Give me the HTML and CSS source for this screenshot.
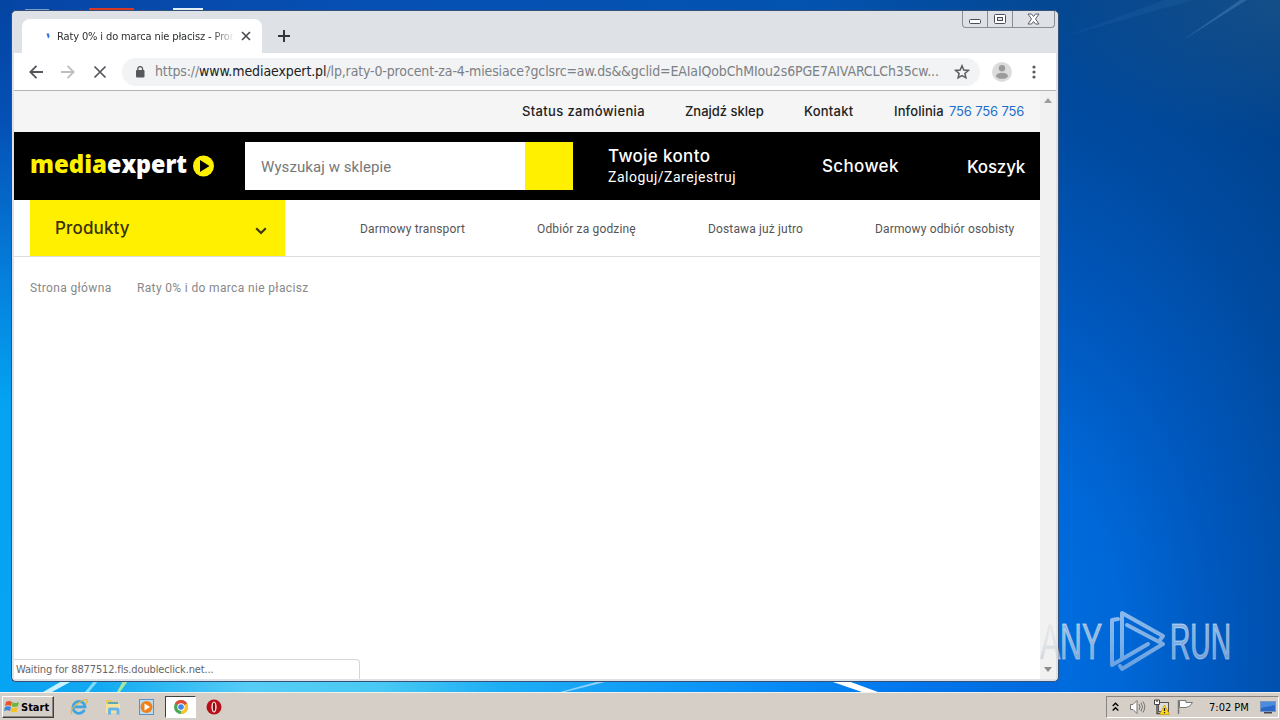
FILE: index.html
```html
<!DOCTYPE html>
<html lang="pl">
<head>
  <meta charset="UTF-8">
  <meta name="viewport" content="width=device-width, initial-scale=1.0">
  <title>Raty 0% i do marca nie płacisz</title>
  <link rel="stylesheet" href="styles.css">
</head>
<body>
  <div class="desktop">
    <svg class="wallpaper" viewBox="0 0 1280 720">
      <path d="M1180 42 L1243 -2 L1250 -2 Z" fill="#5a94cc" opacity=".35"/>
      <path d="M1060 38 L1170 -2 L1200 -2 Z" fill="#3f86c8" opacity=".12"/>
      <rect x="25" y="9" width="24" height="2" fill="#7b9dc8"/>
      <rect x="89" y="8" width="45" height="3" fill="#d63a25"/>
      <rect x="173" y="8" width="30" height="3" fill="#e4eff5"/>
      <path d="M43 692 L62 681 L72 681 L52 692 Z" fill="#c9f1ff"/>
      <path d="M85 692 L94 681 L98 681 L89 692 Z" fill="#7fdcff"/>
      <path d="M117 692 L123 681 L128 681 L120 692 Z" fill="#a6e8a0"/>
      <path d="M560 692 L600 681 L609 681 L565 692 Z" fill="#8fd3ff"/>
      <path d="M830 681 L848 681 L878 692 L862 692 Z" fill="#fff"/>
    </svg>

    <div class="window">
      <div class="tabstrip">
        <div class="tab">
          <svg class="spinner" width="4" height="6" viewBox="0 0 4 6"><path d="M.5 .5 H3 L3.500 4 L2 5.500 Z" fill="#2f72d8"/></svg>
          <span class="tab-title">Raty 0% i do marca nie płacisz - Pron</span>
          <svg class="tab-close" width="10" height="10" viewBox="0 0 10 10"><path d="M1 1 L9 9 M9 1 L1 9" stroke="#4a4d52" stroke-width="1.7"/></svg>
        </div>
        <svg class="new-tab" width="12" height="12" viewBox="0 0 12 12"><path d="M6 0 V12 M0 6 H12" stroke="#35363a" stroke-width="2"/></svg>
        <div class="window-buttons">
          <div class="wb"><svg width="14" height="12" viewBox="0 0 14 12"><rect x="1.500" y="6.500" width="11" height="4" rx="1" fill="#fff" stroke="#4b4e59"/></svg></div>
          <div class="wb"><svg width="12" height="12" viewBox="0 0 12 12"><rect x=".5" y="1.500" width="11" height="9" rx="1" fill="#fff" stroke="#4b4e59"/><rect x="3.500" y="4.500" width="5" height="3" fill="#dee1e6" stroke="#4b4e59"/></svg></div>
          <div class="wb wb-close"><svg width="13" height="12" viewBox="0 0 13 12"><path d="M1 1 H4.500 L6.500 3.500 L8.500 1 H12 L8.500 6 L12 11 H8.500 L6.500 8.500 L4.500 11 H1 L4.500 6 Z" fill="#fff" stroke="#5a5d68"/></svg></div>
        </div>
      </div>

      <div class="toolbar">
        <svg class="tool-icon" width="14" height="14" viewBox="0 0 14 14"><path d="M14 7 H1.500 M7.500 .8 L1.300 7 L7.500 13.200" fill="none" stroke="#53565b" stroke-width="1.8"/></svg>
        <svg class="tool-icon" width="14" height="14" viewBox="0 0 14 14"><path d="M0 7 H12.500 M6.500 .8 L12.700 7 L6.500 13.200" fill="none" stroke="#bcbec1" stroke-width="1.8"/></svg>
        <svg class="tool-icon" width="14" height="14" viewBox="0 0 14 14"><path d="M1.500 1.500 L12.500 12.500 M12.500 1.500 L1.500 12.500" fill="none" stroke="#53565b" stroke-width="1.7"/></svg>
        <div class="omnibox">
          <svg width="10" height="12" viewBox="0 0 10 12"><rect x="1" y="4" width="8.500" height="7.500" rx="1" fill="#55585d"/><path d="M2.800 5 V3 A2.400 2.400 0 0 1 7.600 3 V5" fill="none" stroke="#55585d" stroke-width="1.300"/></svg>
          <span class="url">https://<b>www.mediaexpert.pl</b>/lp,raty-0-procent-za-4-miesiace?gclsrc=aw.ds&amp;&amp;gclid=EAIaIQobChMIou2s6PGE7AIVARCLCh35cw...</span>
          <svg class="star" width="16" height="16" viewBox="0 0 16 16"><path d="M8 1.800 L9.800 6 L14.300 6.400 L10.900 9.400 L11.900 13.800 L8 11.500 L4.100 13.800 L5.100 9.400 L1.700 6.400 L6.200 6 Z" fill="none" stroke="#5a5d62" stroke-width="1.500"/></svg>
        </div>
        <svg class="avatar" width="20" height="20" viewBox="0 0 20 20"><circle cx="10" cy="10" r="10" fill="#dcdcdc"/><circle cx="10" cy="6.300" r="3.200" fill="#9b9b9b"/><ellipse cx="10" cy="13.800" rx="6" ry="3" fill="#9b9b9b"/></svg>
        <svg class="dots" width="4" height="14" viewBox="0 0 4 14"><circle cx="2" cy="2" r="1.600" fill="#5a5d62"/><circle cx="2" cy="7" r="1.600" fill="#5a5d62"/><circle cx="2" cy="12" r="1.600" fill="#5a5d62"/></svg>
      </div>

      <div class="viewport">
        <div class="page">
          <div class="topbar">
            <span class="t-status">Status zamówienia</span>
            <span class="t-shop">Znajdź sklep</span>
            <span class="t-contact">Kontakt</span>
            <span class="t-info">Infolinia</span>
            <span class="t-phone">756 756 756</span>
          </div>

          <header class="header">
            <svg class="logo" width="190" height="40" viewBox="0 0 190 40">
              <text x="0" y="27" class="logo-text" fill="#fff000" textLength="77" lengthAdjust="spacingAndGlyphs">media</text>
              <text x="77" y="27" class="logo-text" fill="#fff" textLength="80" lengthAdjust="spacingAndGlyphs">expert</text>
              <circle cx="173.500" cy="20" r="10.500" fill="#fff000"/>
              <path d="M170 14 L179.500 20 L170 26 Z" fill="#000"/>
            </svg>
            <div class="search">
              <span class="search-text">Wyszukaj w sklepie</span>
              <span class="search-btn"></span>
            </div>
            <div class="account">
              <span class="account-title">Twoje konto</span>
              <span class="account-sub">Zaloguj/Zarejestruj</span>
            </div>
            <span class="clipboard">Schowek</span>
            <span class="cart">Koszyk</span>
          </header>

          <nav class="nav">
            <div class="products">
              <span class="products-text">Produkty</span>
              <svg width="12" height="8" viewBox="0 0 12 8"><path d="M1.200 1.200 L6 6 L10.800 1.200" fill="none" stroke="#3f3613" stroke-width="2.200"/></svg>
            </div>
            <span class="n-transport">Darmowy transport</span>
            <span class="n-pickup">Odbiór za godzinę</span>
            <span class="n-delivery">Dostawa już jutro</span>
            <span class="n-personal">Darmowy odbiór osobisty</span>
          </nav>

          <div class="breadcrumbs">
            <span class="b-home">Strona główna</span>
            <span class="b-page">Raty 0% i do marca nie płacisz</span>
          </div>
        </div>

        <div class="scrollbar">
          <svg width="8" height="5" viewBox="0 0 8 5"><path d="M0 5 L4 0 L8 5 Z" fill="#9c9c9c"/></svg>
          <svg width="8" height="5" viewBox="0 0 8 5"><path d="M0 0 L4 5 L8 0 Z" fill="#8c8c8c"/></svg>
        </div>
        <div class="status"><span class="status-text">Waiting for 8877512.fls.doubleclick.net...</span></div>
      </div>
    </div>

    <svg class="watermark" width="200" height="75" viewBox="0 0 200 75">
      <defs>
        <linearGradient id="wm" gradientUnits="userSpaceOnUse" x1="0" y1="5" x2="0" y2="68">
          <stop offset="0" stop-color="#fff" stop-opacity=".55"/>
          <stop offset=".5" stop-color="#f0f4fa" stop-opacity=".52"/>
          <stop offset="1" stop-color="#c8d4e6" stop-opacity=".5"/>
        </linearGradient>
      </defs>
      <text class="wm-text wm-shadow" x="4" y="54" textLength="62" lengthAdjust="spacingAndGlyphs">ANY</text>
      <text class="wm-text" x="4" y="54" textLength="62" lengthAdjust="spacingAndGlyphs" fill="url(#wm)" stroke="url(#wm)">ANY</text>
      <path d="M82 14 L76 15 V60 L112 39 M86 54 V8 L127 31 L124 35 M91 20 L127 39 L86 64 L84 61" fill="none" stroke="url(#wm)" stroke-width="4" stroke-linejoin="round" stroke-linecap="round"/>
      <text class="wm-text" x="134" y="54" textLength="61" lengthAdjust="spacingAndGlyphs" fill="url(#wm)" stroke="url(#wm)">RUN</text>
    </svg>

    <div class="taskbar">
      <div class="start">
        <svg width="16" height="16" viewBox="0 0 16 16"><path d="M2 3 Q5 1 8 3 L7 7 Q4 5.500 1 7 Z" fill="#e8552a"/><path d="M8.600 3.300 Q12 5 15 3 L14 7 Q11 9 7.700 7.300 Z" fill="#6fb63c"/><path d="M1 8 Q4 6.500 7 8 L6 12 Q3 10.500 0 12 Z" fill="#3c87d9"/><path d="M7.600 8.300 Q11 10 14 8 L13 12.500 Q10 14 6.600 12.500 Z" fill="#f8c322"/></svg>
        <span>Start</span>
      </div>
      <div class="launch">
        <svg width="18" height="18" viewBox="0 0 18 18"><path d="M14.500 11.800 A6 6 0 1 1 15 8.800 H4.500" fill="none" stroke="#3fa4e4" stroke-width="2.800"/><path d="M2 16 Q-1 12 7 6 Q15 0 17 2 Q18 3 15.500 6" fill="none" stroke="#e3b93c" stroke-width="1.300"/></svg>
      </div>
      <div class="launch">
        <svg width="18" height="18" viewBox="0 0 18 18"><path d="M2 2 H7 L8 3.500 H14 V14 H2 Z" fill="#ecc75b"/><rect x="4" y="4" width="10" height="3" fill="#5aa9b6"/><path d="M2 6 H16 V15 H2 Z" fill="#f6e29a"/><path d="M4 16.500 V11 Q4 9.500 6 9.500 H13 Q15.500 9.500 15.500 11 V16.500 H12.500 V12.500 H7 V16.500 Z" fill="#66b5e6"/></svg>
      </div>
      <div class="launch">
        <svg width="18" height="18" viewBox="0 0 18 18"><rect x="1.500" y="1.500" width="14" height="15" fill="#b9dcf5" stroke="#5794c7"/><circle cx="8.500" cy="9" r="6" fill="#f08019"/><path d="M6.500 5.500 L12 9 L6.500 12.500 Z" fill="#fff"/></svg>
      </div>
      <div class="launch active">
        <svg width="16" height="16" viewBox="0 0 16 16"><circle cx="8" cy="8" r="7" fill="#4aa653"/><path d="M8 8 L1.900 4.500 A7 7 0 0 1 14.100 4.500 Z" fill="#de4b3b"/><path d="M8 8 L14.100 4.500 A7 7 0 0 1 8 15 Z" fill="#fbc62b"/><circle cx="8" cy="8" r="3.700" fill="#fff"/><circle cx="8" cy="8" r="2.800" fill="#4285e8"/></svg>
      </div>
      <div class="launch opera">
        <svg width="16" height="16" viewBox="0 0 16 16"><circle cx="8" cy="8" r="7.500" fill="#b51017"/><ellipse cx="8" cy="8" rx="2.600" ry="5.500" fill="#f4e9e6"/><ellipse cx="8" cy="8" rx="1.200" ry="4.400" fill="#8c0b10"/></svg>
      </div>
      <div class="tray">
        <svg class="tray-up" width="7" height="10" viewBox="0 0 7 10"><path d="M.7 4 L3.500 1.200 L6.300 4 M.7 8.500 L3.500 5.700 L6.300 8.500" fill="none" stroke="#000" stroke-width="1.400"/></svg>
        <svg class="tray-sound" width="17" height="16" viewBox="0 0 17 16"><path d="M1.500 5.500 H4 L8 1.500 V14.500 L4 10.500 H1.500 Z" fill="#fff" stroke="#777"/><path d="M10 5 Q12 8 10 11 M12 3.500 Q15 8 12 12.500 M14 2.500 Q17.500 8 14 13.500" fill="none" stroke="#777"/></svg>
        <svg class="tray-net" width="17" height="16" viewBox="0 0 17 16"><rect x="5.500" y="3.500" width="10" height="9" fill="#dcdcdc" stroke="#555"/><path d="M1.500 1 V5.500 H6.500 V1 Z" fill="#fff" stroke="#444"/><path d="M4 1 V3 M4 6 V14.500 H8" fill="none" stroke="#444" stroke-width="1.300"/><path d="M11.500 6 L16.500 15.500 H6.500 Z" fill="#ffd91c" stroke="#c49700" stroke-width=".7"/><path d="M11.500 9 V12 M11.500 13 V14.300" stroke="#222" stroke-width="1.300"/></svg>
        <svg class="tray-flag" width="17" height="16" viewBox="0 0 17 16"><path d="M1.500 1 V15" stroke="#777" stroke-width="1.500"/><path d="M2.500 1.500 H9 V3.500 H15.500 Q13 8.500 9 8.500 H2.500 Z" fill="#fff" stroke="#777"/></svg>
        <span class="clock">7:02 PM</span>
        <svg class="tray-desk" width="16" height="14" viewBox="0 0 16 14"><rect x=".5" y="1.500" width="15" height="10" fill="#2868c8" stroke="#7c97bd"/><path d="M1 2 H15 V5 L1 8 Z" fill="#4b8ce0"/><rect x="4" y="12" width="8" height="1.500" fill="#43474d"/></svg>
      </div>
    </div>
  </div>
</body>
</html>
```
FILE: styles.css
```css
:root {
  --yellow: #fff000;
  --chrome: #dee1e6;
  --face: #d6cfc8;
  --tahoma: 'DejaVu Sans Condensed', 'DejaVu Sans', sans-serif;
}

* {
  box-sizing: border-box;
}

body {
  margin: 0;
  font-family: Roboto, sans-serif;
  overflow: hidden;
}

svg {
  display: block;
  flex: none;
}

span {
  white-space: nowrap;
}

.desktop {
  position: relative;
  width: 1280px;
  height: 720px;
  display: flex;
  flex-direction: column;
  justify-content: flex-end;
  background:
    linear-gradient(to bottom, #0444a2 0, #0450b5 120px, #0580dd 280px, #04a2f1 400px, #08a5f4 720px) 0 0 / 12px 720px no-repeat,
    linear-gradient(to right, #0aa0f2 0, #12aaf2 100px, #56cdf5 250px, #48c9f3 380px, #1eaef5 500px, #0b93f7 720px, #0078ee 900px, #0068dc 1058px, transparent 1059px) 0 681px / 1280px 12px no-repeat,
    linear-gradient(to right, #0745a6 0, #0650b4 400px, #0353b0 800px, #034792 1060px, transparent 1061px) 0 0 / 1280px 11px no-repeat,
    radial-gradient(ellipse 280px 140px at 1290px 0, rgba(30, 86, 138, .7), transparent),
    radial-gradient(ellipse 480px 760px at 1000px 640px, #0070e4 0, #0068d8 25%, #0058be 45%, #004a9f 70%, #003f86 100%);
}

.wallpaper {
  position: absolute;
  inset: 0;
}

/* browser window */
.window {
  position: absolute;
  left: 11px;
  top: 10px;
  width: 1048px;
  height: 672px;
  display: flex;
  flex-direction: column;
  padding: 0 2px 2px;
  border: 1px solid #34517a;
  border-radius: 5px;
  background: var(--chrome);
}

.tabstrip {
  display: flex;
  height: 42px;
  padding-left: 8px;
}

.tab {
  display: flex;
  align-items: center;
  width: 240px;
  height: 34px;
  margin-top: 8px;
  padding-left: 24px;
  border-radius: 8px 8px 0 0;
  background: #fff;
}

.spinner {
  margin-right: 7px;
}

.tab-title {
  width: 176px;
  font: 11px var(--tahoma);
  letter-spacing: -.13px;
  color: #2c2e31;
  -webkit-mask-image: linear-gradient(to right, #000 155px, transparent 178px);
  mask-image: linear-gradient(to right, #000 155px, transparent 178px);
}

.tab-close {
  margin-left: 8px;
}

.new-tab {
  margin: 19px 0 0 16px;
}

.window-buttons {
  display: flex;
  width: 93px;
  height: 17px;
  margin: 0 1px 0 auto;
  border: 1px solid #8b8e97;
  border-top: 0;
  border-radius: 0 0 4px 4px;
}

.wb {
  display: flex;
  align-items: center;
  justify-content: center;
  width: 25px;
  border-right: 1px solid #8b8e97;
}

.wb-close {
  flex: 1;
  border-right: 0;
}

.toolbar {
  display: flex;
  align-items: center;
  height: 38px;
  padding: 0 20px 0 15px;
  border-bottom: 1px solid #b3b4b6;
  background: #fff;
}

.tool-icon {
  margin-right: 18px;
}

.omnibox {
  display: flex;
  align-items: center;
  width: 858px;
  height: 28px;
  margin-left: -3px;
  padding: 0 10px 0 13px;
  border-radius: 14px;
  background: #f1f3f4;
}

.url {
  width: 784px;
  margin-left: 10px;
  padding-bottom: 1px;
  font: 14px var(--tahoma);
  letter-spacing: -.14px;
  color: #7d8085;
}

.url b {
  font-weight: 400;
  letter-spacing: -.1px;
  color: #202124;
}

.star {
  margin-left: auto;
}

.avatar {
  margin-left: 12px;
}

.dots {
  margin-left: auto;
}

.viewport {
  position: relative;
  display: flex;
  flex: 1;
}

.page {
  width: 1026px;
  background: #fff;
}

/* shop page */
.topbar {
  display: flex;
  align-items: center;
  gap: 40px;
  height: 41px;
  padding: 0 0 2px 508px;
  background: #f5f5f5;
  font: 500 13px Inter, sans-serif;
  color: #222;
}

.t-status {
  width: 123px;
  letter-spacing: .35px;
}

.t-shop { width: 79px; }

.t-contact {
  width: 50px;
  letter-spacing: .25px;
}

.t-info {
  width: 50px;
  letter-spacing: .1px;
}

.t-phone {
  margin-left: -35px;
  font-weight: 400;
  letter-spacing: -.15px;
  color: #1a6fcf;
}

.header {
  display: flex;
  align-items: center;
  height: 68px;
  padding-left: 16px;
  background: #000;
  color: #fff;
}

.logo {
  margin-right: 25px;
}

.logo-text {
  font: 800 25px 'Open Sans', sans-serif;
}

.search {
  display: flex;
  align-items: center;
  width: 328px;
  height: 48px;
  padding-left: 16px;
  background: #fff;
}

.search-text {
  padding-top: 2px;
  font-size: 15px;
  letter-spacing: .08px;
  color: #777;
}

.search-btn {
  width: 48px;
  height: 48px;
  margin-left: auto;
  background: var(--yellow);
}

.account {
  display: flex;
  flex-direction: column;
  width: 249px;
  padding-left: 35px;
}

.account-title,
.clipboard,
.cart {
  font: 500 17px/21px Inter, sans-serif;
  letter-spacing: .35px;
}

.account-sub {
  font-size: 14px;
  line-height: 20px;
  letter-spacing: .5px;
}

.clipboard {
  width: 145px;
}

.cart {
  padding-top: 2px;
  letter-spacing: -.2px;
}

.nav {
  display: flex;
  align-items: center;
  height: 57px;
  padding-left: 16px;
  border-bottom: 1px solid #ddd;
  font-size: 12px;
  line-height: 14px;
  letter-spacing: .15px;
  color: #555;
}

.nav > span {
  padding-top: 2px;
}

.products {
  display: flex;
  align-items: center;
  justify-content: space-between;
  width: 255px;
  height: 56px;
  margin-right: 75px;
  padding: 0 18px 0 25px;
  background: var(--yellow);
}

.products svg {
  margin-top: 5px;
}

.products-text {
  font: 500 17px Inter, sans-serif;
  color: #3a3108;
}

.n-transport { width: 177px; }
.n-pickup { width: 171px; }
.n-delivery { width: 167px; }

.breadcrumbs {
  display: flex;
  padding: 23px 16px;
  font-size: 12px;
  line-height: 17px;
  letter-spacing: .35px;
  color: #888;
}

.b-home {
  width: 107px;
}

.scrollbar {
  display: flex;
  flex-direction: column;
  align-items: center;
  justify-content: space-between;
  width: 16px;
  padding: 7px 0;
  background: #f1f1f1;
}

.status {
  position: absolute;
  left: 0;
  bottom: 0;
  width: 346px;
  height: 20px;
  padding: 2px 2px;
  border: 1px solid #d5d6d8;
  border-left: 0;
  border-bottom: 0;
  border-top-right-radius: 4px;
  background: #fff;
  font: 11px/16px var(--tahoma);
  letter-spacing: -.14px;
  color: #666;
}

/* watermark over the desktop corner */
.watermark {
  position: absolute;
  left: 1036px;
  top: 605px;
}

.wm-text {
  font: 50px 'Liberation Sans', sans-serif;
}

.wm-shadow {
  fill: #777;
  fill-opacity: .3;
}

/* taskbar */
.taskbar {
  position: relative;
  display: flex;
  align-items: center;
  height: 28px;
  padding: 1px 1px 0 2px;
  border-top: 1px solid #f3f1ee;
  background: var(--face);
}

.start {
  display: flex;
  align-items: center;
  gap: 1px;
  width: 52px;
  height: 22px;
  margin-right: 13px;
  padding-left: 1px;
  border: 1px solid;
  border-color: #fff #404040 #404040 #fff;
  box-shadow: inset -1px -1px #8a8580;
  font: bold 11px var(--tahoma);
}

.launch {
  display: flex;
  align-items: center;
  justify-content: center;
  width: 24px;
  height: 22px;
  margin-right: 10px;
}

.active {
  width: 31px;
  margin: 0 6px 0 -4px;
  border: 1px solid;
  border-color: #404040 #fff #fff #404040;
  background: #fff;
}

.tray {
  display: flex;
  align-items: center;
  width: 173px;
  height: 22px;
  margin-left: auto;
  border: 1px solid;
  border-color: #8a8580 #fff #fff #8a8580;
}

.tray-up { margin-left: 5px; }
.tray-sound { margin-left: 10px; }
.tray-net { margin-left: 7px; }
.tray-flag { margin-left: 7px; }

.clock {
  width: 40px;
  margin-left: 15px;
  font: 11px var(--tahoma);
}

.tray-desk {
  margin-left: 11px;
}
```
